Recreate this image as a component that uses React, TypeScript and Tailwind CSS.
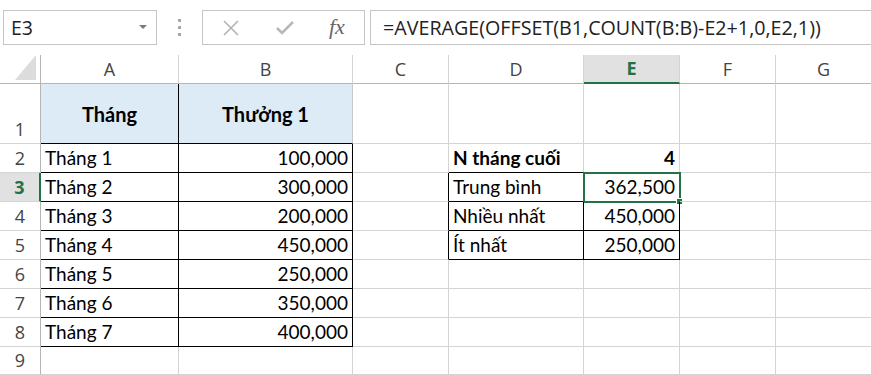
import React from "react";

const GRID = "#d4d4d4";
const BLK = "#000000";

type Cell = {
  text?: string;
  align?: "left" | "right" | "center";
  bold?: boolean;
  bg?: string;
  r?: string;
  b?: string;
  sel?: boolean;
  middle?: boolean;
};

const cols = ["A", "B", "C", "D", "E", "F", "G"];

function buildRows(): Cell[][] {
  const rows: Cell[][] = [];
  for (let i = 0; i < 9; i++) {
    rows.push(cols.map(() => ({ r: GRID, b: GRID })));
  }
  rows[0][0] = { text: "Tháng", align: "center", bold: true, bg: "#ddebf7", r: BLK, b: BLK, middle: true };
  rows[0][1] = { text: "Thưởng 1", align: "center", bold: true, bg: "#ddebf7", r: "#c9c9c9", b: BLK, middle: true };
  const vals = ["100,000", "300,000", "200,000", "450,000", "250,000", "350,000", "400,000"];
  for (let i = 0; i < 7; i++) {
    rows[i + 1][0] = { text: `Tháng ${i + 1}`, align: "left", r: BLK, b: BLK };
    rows[i + 1][1] = { text: vals[i], align: "right", r: BLK, b: BLK };
  }
  rows[1][3] = { text: "N tháng cuối", align: "left", bold: true, r: GRID, b: BLK };
  rows[1][4] = { text: "4", align: "right", bold: true, r: GRID, b: BLK };
  const labels = ["Trung bình", "Nhiều nhất", "Ít nhất"];
  const res = ["362,500", "450,000", "250,000"];
  for (let i = 0; i < 3; i++) {
    rows[i + 2][2] = { r: BLK, b: GRID };
    rows[i + 2][3] = { text: labels[i], align: "left", r: BLK, b: BLK };
    rows[i + 2][4] = { text: res[i], align: "right", r: BLK, b: BLK, sel: i === 0 };
  }
  return rows;
}

const rowHeights = [60, 29, 29, 29, 29, 29, 29, 29, 28];

export default function App() {
  const rows = buildRows();
  return (
    <div className="w-[871px] h-[375px] overflow-hidden bg-white relative">
      {/* Formula bar */}
      <div className="h-[55px] flex items-start pt-[10px]">
        <div
          className="ml-[3px] w-[154px] h-[35px] border border-[#c6c6c6] flex items-center justify-between pl-[7px] pr-[9px] text-[19.5px] text-[#222]"
          style={{ fontFamily: '"Open Sans", sans-serif' }}
        >
          <span>E3</span>
          <svg width="8" height="5" viewBox="0 0 8 5">
            <path d="M0 0 L8 0 L4 4 Z" fill="#7a7a7a" />
          </svg>
        </div>
        <div className="w-[45px] h-[35px] flex flex-col items-center justify-center gap-[4px]">
          <div className="w-[3px] h-[3px] bg-[#a8a8a8]" />
          <div className="w-[3px] h-[3px] bg-[#a8a8a8]" />
          <div className="w-[3px] h-[3px] bg-[#a8a8a8]" />
        </div>
        <div className="w-[163px] h-[35px] border border-[#c6c6c6] flex items-center">
          <svg className="ml-[19px]" width="18" height="18" viewBox="0 0 18 18">
            <path d="M2 2 L16 16 M16 2 L2 16" stroke="#b3b3b3" strokeWidth="1.6" fill="none" />
          </svg>
          <svg className="ml-[35px]" width="20" height="18" viewBox="0 0 20 18">
            <path d="M2 9 L7 14 L18 3" stroke="#b8b8b8" strokeWidth="2.6" fill="none" />
          </svg>
          <span
            className="ml-[34px] italic text-[22px] text-[#666] leading-none -mt-[2px]"
            style={{ fontFamily: '"Liberation Serif", serif' }}
          >
            fx
          </span>
        </div>
        <div
          className="ml-[5px] flex-1 h-[35px] border border-r-0 border-[#c6c6c6] flex items-center pl-[12px] text-[19.7px] text-[#222] whitespace-nowrap"
          style={{ fontFamily: '"Open Sans", sans-serif' }}
        >
          =AVERAGE(OFFSET(B1,COUNT(B:B)-E2+1,0,E2,1))
        </div>
      </div>

      {/* Sheet grid */}
      <div
        className="grid grid-cols-[41px_138px_174px_96px_135px_96px_96px_96px]"
        style={{ fontFamily: '"Open Sans", sans-serif' }}
      >
        <div className="h-[29px] border-r border-b border-[#b5b5b5] flex items-end justify-end">
          <svg width="22" height="26" viewBox="0 0 22 26" className="mr-[3px] mb-[2px]">
            <path d="M0 25 L21 25 L21 0 Z" fill="#dcdcdc" />
          </svg>
        </div>
        {cols.map((c) =>
          c === "E" ? (
            <div
              key={c}
              className="h-[29px] bg-[#e1e1e1] border-r border-r-[#d4d4d4] border-b-2 border-b-[#217346] flex items-center justify-center text-[18px] font-bold text-[#217346]"
            >
              {c}
            </div>
          ) : (
            <div
              key={c}
              className="h-[29px] border-r border-r-[#d4d4d4] border-b border-b-[#b5b5b5] flex items-center justify-center text-[18px] text-[#444]"
            >
              {c}
            </div>
          )
        )}
        {rows.map((row, ri) => (
          <React.Fragment key={ri}>
            {ri === 2 ? (
              <div
                className="bg-[#e1e1e1] border-r-2 border-r-[#217346] border-b border-b-[#d4d4d4] flex items-end justify-center pb-[2px] text-[18px] font-bold text-[#217346] leading-none"
                style={{ height: rowHeights[ri] }}
              >
                <span className="mb-[3px]">{ri + 1}</span>
              </div>
            ) : (
              <div
                className="border-r border-r-[#b5b5b5] border-b border-b-[#d4d4d4] flex items-end justify-center pb-[2px] text-[18px] text-[#444] leading-none"
                style={{ height: rowHeights[ri] }}
              >
                <span className="mb-[3px]">{ri + 1}</span>
              </div>
            )}
            {row.map((cell, ci) => (
              <div
                key={ci}
                className={
                  "relative flex px-[4px] border-r border-b text-black leading-none " +
                  (cell.middle ? "items-center text-[20px] " : "items-end pb-[5px] text-[19px] ") +
                  (cell.align === "right"
                    ? "justify-end "
                    : cell.align === "center"
                    ? "justify-center "
                    : "justify-start ") +
                  (cell.bold ? "font-bold" : "")
                }
                style={{
                  height: rowHeights[ri],
                  borderRightColor: cell.r,
                  borderBottomColor: cell.b,
                  backgroundColor: cell.bg,
                  fontFamily: '"Lato", "Open Sans", sans-serif',
                }}
              >
                {cell.text}
                {cell.sel && (
                  <div className="absolute -left-px -top-px w-[98px] h-[31px] border-2 border-[#217346]">
                    <div className="absolute -right-[4px] -bottom-[4px] w-[7px] h-[7px] bg-[#217346] border border-white" />
                  </div>
                )}
              </div>
            ))}
          </React.Fragment>
        ))}
      </div>
    </div>
  );
}
